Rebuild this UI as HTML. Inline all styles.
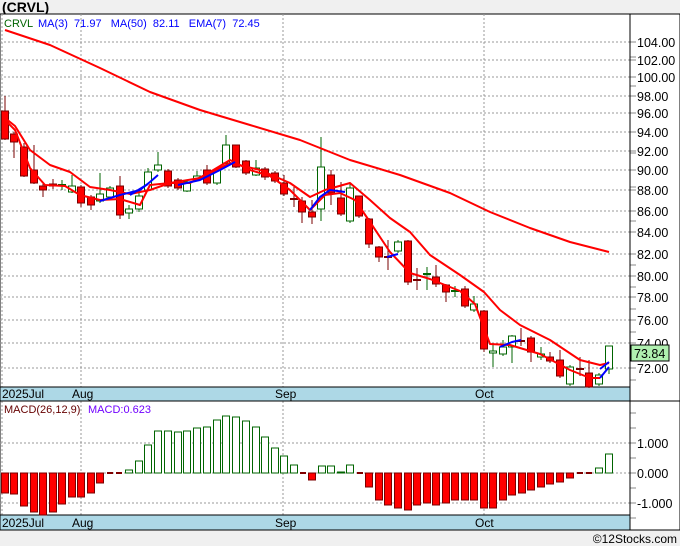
<!DOCTYPE html>
<html><head><meta charset="utf-8"><style>
html,body{margin:0;padding:0;background:#f0f0f0;}
body{width:680px;height:546px;overflow:hidden;position:relative;font-family:"Liberation Sans",sans-serif;}
</style></head><body>
<svg id="s" width="680" height="546" xmlns="http://www.w3.org/2000/svg" style="position:absolute;left:0;top:0">
<rect x="0" y="0" width="680" height="546" fill="#f0f0f0"/>
<text x="2" y="12" font-size="14" font-weight="bold" fill="#000" font-family="Liberation Sans, sans-serif">(CRVL)</text>
<rect x="0" y="14" width="680" height="516" fill="#fff" stroke="#000" stroke-width="1"/>
<g id="g"></g>
</svg>
<script>
const g=document.getElementById('g');
let h='';
const L=(x1,y1,x2,y2,c,w,d)=>{h+=`<line x1="${x1}" y1="${y1}" x2="${x2}" y2="${y2}" stroke="${c}" stroke-width="${w}"${d?` stroke-dasharray="${d}"`:''}/>`;};
const T=(x,y,t,c,s,a)=>{h+=`<text x="${x}" y="${y}" fill="${c}" font-size="${s}" font-family="Liberation Sans, sans-serif"${a?` text-anchor="${a}"`:''}>${t}</text>`;};
// price grid
const lv=[[104,42],[102,60],[100,77],[98,96],[96,113],[94,132],[92,151],[90,170],[88,190],[86,211],[84,232],[82,254],[80,276],[78,297],[76,320],[74,343],[72,368]];
lv.forEach(([v,y])=>{L(0,y,630,y,'#999',1,'2,2');L(630,y,636,y,'#888',1);T(637,y+5,v.toFixed(2),'#000',12.5);});
[57,86,153,187,221,265,287,309,332,356,380].forEach(y=>L(630,y,636,y,'#888',1));
[2,81,283,484].forEach(x=>{L(x,14,x,387,'#999',1,'2,2');L(x,401,x,515,'#999',1,'2,2');});
// MACD grid
[[1,443,'1.000'],[0,473,'0.000'],[-1,503,'-1.000']].forEach(([v,y,t])=>{L(0,y,630,y,'#999',1,'2,2');L(630,y,636,y,'#888',1);T(637,y+5,t,'#000',12.5);});
[413,428,458,488,518].forEach(y=>L(630,y,636,y,'#888',1));
// date bars
h+=`<rect x="0" y="387" width="630" height="14" fill="#add8e6" stroke="#000"/>`;
h+=`<rect x="0" y="515" width="630" height="15" fill="#add8e6" stroke="#000"/>`;
L(0,401,680,401,'#000',1);L(630,14,630,530,'#000',1);
[['2025Jul',2],['Aug',72],['Sep',275],['Oct',475]].forEach(([t,x])=>{T(x,398,t,'#000',12);T(x,527,t,'#000',12);});
// candles [x,open,close,high,low,color]
const C=[[5,111,139,96,140,'r'],[14,134,142,132,158,'r'],[24,147,176,143,177,'r'],[34,170,183,145,184,'r'],[43,186,190,184,197,'r'],[53,184,186,179,189,'r'],[62,185,185,180,190,'g'],[72,186,192,175,193,'g'],[81,187,203,185,207,'r'],[91,197,205,195,210,'r'],[100,194,201,173,203,'g'],[110,188,197,186,199,'g'],[120,186,215,176,219,'r'],[129,209,213,205,219,'g'],[139,196,209,190,212,'g'],[148,172,190,168,191,'g'],[158,165,170,152,172,'g'],[168,171,186,169,188,'r'],[178,180,188,178,190,'r'],[187,182,191,180,192,'g'],[197,176,179,171,181,'g'],[207,170,183,165,185,'r'],[217,170,183,168,185,'g'],[226,145,163,135,165,'g'],[236,145,167,145,168,'r'],[246,161,173,160,175,'r'],[256,168,175,160,176,'g'],[265,169,177,167,180,'r'],[275,173,181,171,183,'r'],[284,183,194,175,196,'r'],[294,199,199,187,207,'r'],[302,201,212,197,223,'r'],[312,212,217,200,224,'r'],[321,167,209,137,221,'g'],[331,175,193,170,205,'r'],[341,198,214,182,216,'r'],[350,188,221,184,223,'g'],[359,196,216,196,218,'r'],[369,219,244,218,248,'r'],[379,247,257,246,262,'r'],[388,257,257,240,270,'r'],[398,242,251,240,253,'g'],[408,241,282,240,285,'r'],[417,280,280,268,290,'r'],[427,274,274,267,290,'g'],[436,277,284,265,287,'r'],[446,285,292,284,302,'r'],[455,291,292,286,297,'g'],[465,289,306,286,308,'r'],[474,304,310,296,312,'g'],[484,311,349,310,352,'r'],[493,351,353,345,367,'g'],[503,347,354,340,356,'g'],[512,336,347,335,363,'g'],[521,341,341,328,346,'r'],[531,338,352,336,362,'r'],[541,354,357,347,360,'g'],[550,357,361,352,363,'r'],[560,360,376,350,378,'r'],[570,367,384,365,386,'g'],[580,369,369,357,376,'r'],[589,373,387,360,388,'r'],[599,375,384,373,386,'g'],[609,346,369,346,374,'g']];
C.forEach(([x,o,c,hi,lo,col])=>{const t=Math.min(o,c),b=Math.max(o,c);const sc=col=='r'?'#7a0000':'#006400';L(x,hi,x,lo,sc,1);
 if(b-t<2){L(x-4,t,x+4,t,sc,2);}else h+=`<rect x="${x-3.5}" y="${t}" width="7" height="${b-t}" fill="${col=='r'?'#f00':'#fff'}" stroke="${sc}" stroke-width="1"/>`;});
const P=(pts,c,w)=>{h+=`<polyline points="${pts.map(p=>p.join(',')).join(' ')}" fill="none" stroke="${c}" stroke-width="${w}" stroke-linejoin="round"/>`;};
P([[5,30],[50,45],[100,68],[150,92],[200,110],[250,125],[300,140],[350,160],[400,175],[450,193],[490,212],[530,228],[570,242],[609,252]],'#f00',2);
P([[5,118],[15,126],[30,150],[50,165],[70,172],[90,187],[110,190],[130,194],[150,190],[170,183],[200,178],[230,163],[260,170],[290,183],[310,197],[325,190],[350,183],[370,200],[390,218],[410,232],[430,255],[460,275],[484,292],[500,310],[520,325],[550,340],[580,360],[600,365],[609,363]],'#f00',2);
P([[5,120],[15,130],[30,168],[45,185],[65,186],[80,195],[100,200],[120,199],[140,205],[150,185],[170,183],[190,183],[210,172],[230,160],[250,170],[270,176],[290,190],[310,210],[325,195],[340,193],[355,200],[370,222],[390,252],[410,273],[430,279],[460,291],[475,304],[490,344],[510,345],[540,354],[570,370],[590,378],[600,378]],'#f00',2);
[[[100,201],[120,195],[140,190],[150,182],[158,175]],[[178,185],[200,180],[220,170],[235,162]],[[310,210],[320,197],[330,190],[345,192]],[[387,257],[398,254]],[[500,347],[512,342],[521,340]],[[600,378],[609,367]],[[600,369],[609,362]],[[130,195],[148,184]]].forEach(p=>P(p,'#00f',2));
// legend
T(4,27,'CRVL','#006400',11);T(38,27,'MA(3)&#160; 71.97&#160;&#160; MA(50)&#160; 82.11&#160;&#160; EMA(7)&#160; 72.45','#0000ff',11);
h+=`<rect x="631" y="345" width="38" height="16" fill="#b0f0b0" stroke="#000"/>`;T(634,358,'73.84','#000',12.5);
// MACD
T(4,413,'MACD(26,12,9)','#600',11);T(88,413,'MACD:0.623','#7000ff',11);
const M=[[5,493],[14,494],[24,506],[34,512],[43,515],[53,512],[62,504],[72,497],[81,497],[91,493],[100,483],[110,474,'d'],[119,474,'d'],[129,470],[139,461],[148,445],[158,431],[168,431],[178,432],[187,431],[197,428],[207,427],[217,420],[226,416],[236,417],[246,421],[256,427],[265,437],[275,448],[284,456],[294,465],[303,474,'d'],[312,480],[322,466],[331,466],[341,472],[350,465],[360,474,'d'],[369,487],[379,500],[388,505],[398,508],[408,510],[417,505],[427,503],[436,505],[446,503],[455,500],[465,500],[474,500],[484,508],[493,508],[503,500],[512,495],[522,493],[531,490],[541,487],[550,484],[560,482],[570,478],[580,475,'d'],[589,474,'d'],[599,468],[609,454]];
M.forEach(([x,y,d])=>{const z=473;if(d){L(x-3,z,x+3,z,y>z?'#800000':'#006400',2);return;}
 if(y>z)h+=`<rect x="${x-3.5}" y="${z}" width="7" height="${y-z}" fill="#f00" stroke="#7a0000"/>`;else h+=`<rect x="${x-3.5}" y="${y}" width="7" height="${z-y}" fill="#fff" stroke="#006400"/>`;});
T(677,543,'©12Stocks.com','#000',12,'end');
g.innerHTML=h;
</script>
</body></html>
